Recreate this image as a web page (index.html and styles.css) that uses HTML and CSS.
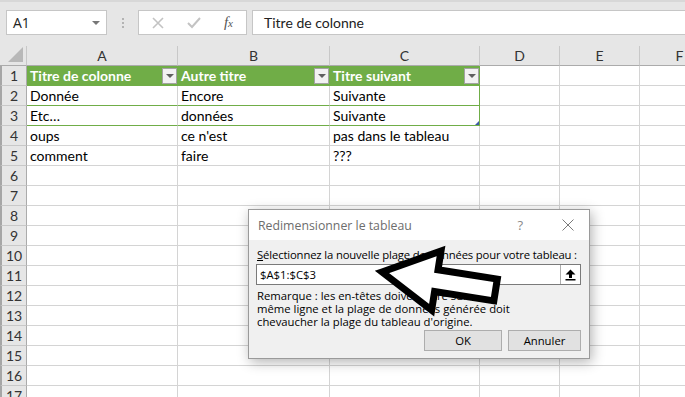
FILE: index.html
```html
<!DOCTYPE html>
<html lang="fr">
<head>
    <meta charset="UTF-8">
    <title>Redimensionner le tableau</title>
    <link rel="stylesheet" href="styles.css">
</head>
<body>
    <div class="app">
        <div class="toolbar">
            <div class="namebox">
                <span>A1</span>
                <span class="caret"></span>
            </div>
            <div class="grip"><i></i><i></i><i></i></div>
            <div class="fxbox">
                <svg width="12" height="12" viewBox="0 0 12 12"><path d="M1 1 L11 11 M11 1 L1 11" stroke="#c3c3c3" stroke-width="1.6" fill="none"/></svg>
                <svg width="14" height="12" viewBox="0 0 14 12"><path d="M1 6 L5 10 L13 1" stroke="#c3c3c3" stroke-width="2" fill="none"/></svg>
                <span class="fx">f<small>x</small></span>
            </div>
            <div class="formula">Titre de colonne</div>
        </div>

        <div class="sheet">
            <div class="row headrow">
                <div class="corner"><span></span></div>
                <div class="colhead">A</div>
                <div class="colhead">B</div>
                <div class="colhead">C</div>
                <div class="colhead">D</div>
                <div class="colhead">E</div>
                <div class="colhead">F</div>
            </div>
            <div class="row">
                <div class="rowhead">1</div>
                <div class="cell th">Titre de colonne<span class="filter"></span></div>
                <div class="cell th">Autre titre<span class="filter"></span></div>
                <div class="cell th last">Titre suivant<span class="filter"></span></div>
                <div class="cell"></div><div class="cell"></div><div class="cell"></div>
            </div>
            <div class="row">
                <div class="rowhead">2</div>
                <div class="cell td">Donnée</div>
                <div class="cell td">Encore</div>
                <div class="cell td last">Suivante</div>
                <div class="cell"></div><div class="cell"></div><div class="cell"></div>
            </div>
            <div class="row">
                <div class="rowhead">3</div>
                <div class="cell td">Etc…</div>
                <div class="cell td">données</div>
                <div class="cell td last">Suivante<span class="handle"></span></div>
                <div class="cell"></div><div class="cell"></div><div class="cell"></div>
            </div>
            <div class="row">
                <div class="rowhead">4</div>
                <div class="cell">oups</div>
                <div class="cell">ce n'est</div>
                <div class="cell">pas dans le tableau</div>
                <div class="cell"></div><div class="cell"></div><div class="cell"></div>
            </div>
            <div class="row">
                <div class="rowhead">5</div>
                <div class="cell">comment</div>
                <div class="cell">faire</div>
                <div class="cell">???</div>
                <div class="cell"></div><div class="cell"></div><div class="cell"></div>
            </div>
            <div class="row"><div class="rowhead">6</div><div class="cell"></div><div class="cell"></div><div class="cell"></div><div class="cell"></div><div class="cell"></div><div class="cell"></div></div>
            <div class="row"><div class="rowhead">7</div><div class="cell"></div><div class="cell"></div><div class="cell"></div><div class="cell"></div><div class="cell"></div><div class="cell"></div></div>
            <div class="row"><div class="rowhead">8</div><div class="cell"></div><div class="cell"></div><div class="cell"></div><div class="cell"></div><div class="cell"></div><div class="cell"></div></div>
            <div class="row"><div class="rowhead">9</div><div class="cell"></div><div class="cell"></div><div class="cell"></div><div class="cell"></div><div class="cell"></div><div class="cell"></div></div>
            <div class="row"><div class="rowhead">10</div><div class="cell"></div><div class="cell"></div><div class="cell"></div><div class="cell"></div><div class="cell"></div><div class="cell"></div></div>
            <div class="row"><div class="rowhead">11</div><div class="cell"></div><div class="cell"></div><div class="cell"></div><div class="cell"></div><div class="cell"></div><div class="cell"></div></div>
            <div class="row"><div class="rowhead">12</div><div class="cell"></div><div class="cell"></div><div class="cell"></div><div class="cell"></div><div class="cell"></div><div class="cell"></div></div>
            <div class="row"><div class="rowhead">13</div><div class="cell"></div><div class="cell"></div><div class="cell"></div><div class="cell"></div><div class="cell"></div><div class="cell"></div></div>
            <div class="row"><div class="rowhead">14</div><div class="cell"></div><div class="cell"></div><div class="cell"></div><div class="cell"></div><div class="cell"></div><div class="cell"></div></div>
            <div class="row"><div class="rowhead">15</div><div class="cell"></div><div class="cell"></div><div class="cell"></div><div class="cell"></div><div class="cell"></div><div class="cell"></div></div>
            <div class="row"><div class="rowhead">16</div><div class="cell"></div><div class="cell"></div><div class="cell"></div><div class="cell"></div><div class="cell"></div><div class="cell"></div></div>
            <div class="row"><div class="rowhead">17</div><div class="cell"></div><div class="cell"></div><div class="cell"></div><div class="cell"></div><div class="cell"></div><div class="cell"></div></div>
        </div>

        <div class="dialog">
            <div class="dialog-title">
                <span class="title">Redimensionner le tableau</span>
                <span class="help">?</span>
                <svg class="close" width="12" height="12" viewBox="0 0 12 12"><path d="M0.5 0.5 L11.5 11.5 M11.5 0.5 L0.5 11.5" stroke="#7a7a7a" stroke-width="1" fill="none"/></svg>
            </div>
            <div class="dialog-body">
                <div class="label"><u>S</u>électionnez la nouvelle plage de données pour votre tableau :</div>
                <div class="range">
                    <span class="range-value">$A$1:$C$3</span>
                    <span class="collapse">
                        <svg width="11" height="12" viewBox="0 0 11 12"><path d="M5.5 0.5 L10.5 5.5 L7 5.5 L7 9 L4 9 L4 5.5 L0.5 5.5 Z" fill="#000"/><rect x="0.5" y="10" width="10" height="1.5" fill="#000"/></svg>
                    </span>
                </div>
                <p class="note">Remarque : les en-têtes doivent être sur la<br>même ligne et la plage de données générée doit<br>chevaucher la plage du tableau d'origine.</p>
                <div class="buttons">
                    <button class="ok">OK</button>
                    <button class="cancel">Annuler</button>
                </div>
            </div>
        </div>

        <svg class="arrow" width="685" height="397" viewBox="0 0 685 397">
            <polygon transform="translate(382 272) rotate(9)" points="0,0 55,-30 55,-11 115,-11 115,11 55,11 55,30" fill="#fff" stroke="#000" stroke-width="7" stroke-linejoin="miter"/>
        </svg>
    </div>
</body>
</html>
```

FILE: styles.css
```css
body {
    margin: 0;
    background-color: #fff;
    overflow: hidden;
}

.app {
    position: relative;
    width: 685px;
    height: 397px;
    overflow: hidden;
    font-family: 'Lato', sans-serif;
    color: #000;
}

/* formula bar */
.toolbar {
    height: 46px;
    box-sizing: border-box;
    background-color: #e6e6e6;
    border-top: 2px solid #d8d8d8;
    display: flex;
    align-items: flex-start;
    padding: 8px 0 0 6px;
}

.namebox {
    width: 101px;
    height: 25px;
    box-sizing: border-box;
    background-color: #fff;
    border: 1px solid #c6c6c6;
    display: flex;
    align-items: center;
    justify-content: space-between;
    padding: 0 6px 0 6px;
    font-family: 'Open Sans', sans-serif;
    font-size: 14px;
    color: #222;
}

.caret {
    width: 0;
    height: 0;
    border-left: 4px solid transparent;
    border-right: 4px solid transparent;
    border-top: 4px solid #777;
}

.grip {
    width: 31px;
    height: 25px;
    display: flex;
    flex-direction: column;
    align-items: center;
    justify-content: center;
    gap: 2px;
}

.grip i {
    width: 2px;
    height: 2px;
    background-color: #b3b3b3;
}

.fxbox {
    width: 109px;
    height: 25px;
    box-sizing: border-box;
    background-color: #fff;
    border: 1px solid #c6c6c6;
    display: flex;
    align-items: center;
    justify-content: space-between;
    padding: 0 13px 0 13px;
}

.fx {
    font-family: 'Liberation Serif', serif;
    font-style: italic;
    font-size: 15px;
    color: #555;
}

.fx small {
    font-size: 11px;
}

.formula {
    flex: 1;
    height: 25px;
    margin-left: 5px;
    box-sizing: border-box;
    background-color: #fff;
    border: 1px solid #c6c6c6;
    border-right: none;
    padding-left: 11px;
    font-size: 14px;
    line-height: 23px;
    color: #222;
}

/* grid */
.row {
    display: grid;
    grid-template-columns: 27px 151px 152px 150px 80px 80px 80px;
    height: 20px;
}

.row > div {
    box-sizing: border-box;
    border-right: 1px solid #d4d4d4;
    border-bottom: 1px solid #d4d4d4;
}

.headrow > div {
    background-color: #e6e6e6;
    border-right-color: #c8c8c8;
    border-bottom-color: #ababab;
    text-align: center;
    font-size: 14px;
    line-height: 19px;
    color: #333;
}

.corner {
    position: relative;
}

.corner span {
    position: absolute;
    right: 3px;
    bottom: 3px;
    width: 0;
    height: 0;
    border-left: 15px solid transparent;
    border-bottom: 15px solid #b8b8b8;
}

.row > .rowhead {
    background-color: #e6e6e6;
    border-right-color: #ababab;
    border-bottom-color: #c8c8c8;
    border-left: 2px solid #a6a6a6;
    text-align: center;
    font-size: 14px;
    line-height: 19px;
    color: #333;
}

.cell {
    font-size: 14px;
    line-height: 19px;
    padding-left: 3px;
    white-space: nowrap;
    position: relative;
}

.row > .th {
    background-color: #70ad47;
    border-color: #70ad47;
    color: #fff;
    font-weight: bold;
    display: flex;
    justify-content: space-between;
    align-items: center;
    padding-right: 0;
}

.row > .td {
    border-bottom-color: #70ad47;
}

.row > .last {
    border-right-color: #70ad47;
}

.filter {
    width: 15px;
    height: 16px;
    box-sizing: border-box;
    background-color: #f2f2f2;
    border: 1px solid #a3a3a3;
    display: flex;
    justify-content: center;
    padding-top: 5px;
    margin-top: 1px;
}

.filter::after {
    content: '';
    width: 0;
    height: 0;
    border-left: 4px solid transparent;
    border-right: 4px solid transparent;
    border-top: 4px solid #606060;
}

.handle {
    position: absolute;
    right: 0;
    bottom: 0;
    width: 0;
    height: 0;
    border-left: 4px solid transparent;
    border-bottom: 4px solid #3f5aa8;
}

/* dialog */
.dialog {
    position: absolute;
    left: 248px;
    top: 209px;
    width: 342px;
    height: 150px;
    box-sizing: border-box;
    border: 1px solid #9a9a9a;
    background-color: #f0f0f0;
    box-shadow: 2px 3px 12px rgba(0, 0, 0, 0.3);
    font-family: 'Open Sans', sans-serif;
    font-size: 11.3px;
    color: #000;
}

.dialog-title {
    height: 30px;
    background-color: #fff;
    display: flex;
    align-items: center;
    padding: 0 15px 0 9px;
    color: #6d6d6d;
}

.title {
    flex: 1;
    font-size: 12.3px;
}

.help {
    color: #8a8a8a;
    font-size: 13px;
    margin-right: 39px;
}

.dialog-body {
    padding: 7px 7px 0 7px;
}

.label {
    height: 17px;
    line-height: 16px;
    padding-left: 1px;
    white-space: nowrap;
    letter-spacing: -0.15px;
}

.range {
    height: 21px;
    box-sizing: border-box;
    width: 325px;
    background-color: #fff;
    border: 1px solid #7a7a7a;
    display: flex;
    justify-content: space-between;
    align-items: stretch;
}

.range-value {
    padding-left: 3px;
    line-height: 19px;
}

.collapse {
    width: 19px;
    border-left: 1px solid #adadad;
    display: flex;
    align-items: center;
    justify-content: center;
    background-color: #fff;
}

.note {
    margin: 4px 0 0 1px;
    line-height: 13px;
}

.buttons {
    display: flex;
    justify-content: flex-end;
    gap: 6px;
    margin-top: 2px;
    padding-right: 1px;
}

.buttons button {
    height: 21px;
    box-sizing: border-box;
    background-color: #e1e1e1;
    border: 1px solid #adadad;
    font-family: 'Open Sans', sans-serif;
    font-size: 11.3px;
    color: #000;
    padding: 0;
}

.ok {
    width: 78px;
}

.cancel {
    width: 73px;
}

.arrow {
    position: absolute;
    left: 0;
    top: 0;
}
```
